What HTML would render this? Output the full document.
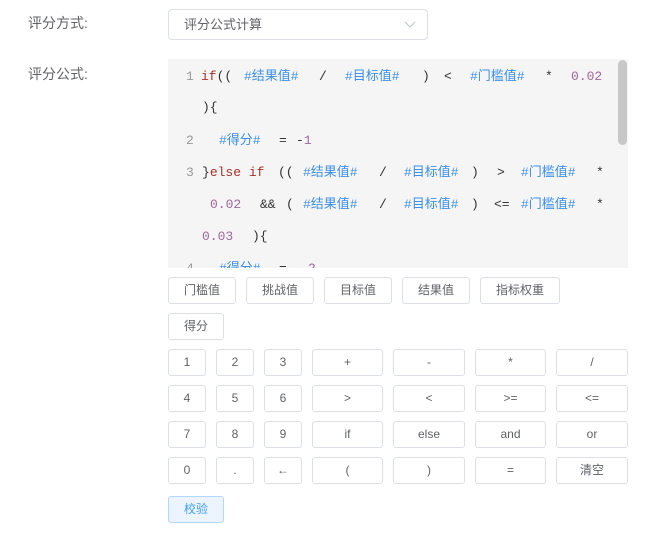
<!DOCTYPE html><html><head><meta charset="utf-8"><style>
body{margin:0;width:666px;height:537px;background:#fff;position:relative;overflow:hidden;font-family:"Liberation Sans","Noto Sans CJK SC",sans-serif;color:#606266}
.a{position:absolute}
.lbl{font-size:14px;line-height:16px}
.code{position:absolute;left:168px;top:59px;width:460px;height:209px;background:#f5f5f5;overflow:hidden}
.t{position:absolute;font-family:"Liberation Mono","Noto Sans CJK SC",monospace;font-size:13px;line-height:16px;white-space:pre;color:#333}
.n{color:#999}.k{color:#a9302a}.b{color:#3d8fe8}.p{color:#a0689c}
.btn{position:absolute;box-sizing:border-box;border:1px solid #dcdfe6;border-radius:3px;background:#fff;font-size:12px;line-height:25px;text-align:center;color:#606266}
</style></head><body>
<div class="a lbl" style="left:28px;top:15px">评分方式:</div>
<div class="a lbl" style="left:28px;top:66px">评分公式:</div>
<div class="a" style="left:168px;top:9px;width:260px;height:31px;box-sizing:border-box;border:1px solid #dcdfe6;border-radius:4px"></div>
<div class="a" style="left:184px;top:17px;font-size:13px;line-height:16px">评分公式计算</div>
<svg class="a" style="left:403px;top:19px" width="14" height="10"><path d="M2 3l5 5 5-5" fill="none" stroke="#c0c4cc" stroke-width="1"/></svg>
<div class="code">
<div style="position:absolute;left:450px;top:1px;width:9px;height:85px;background:#c8c8c8;border-radius:5px"></div>
</div>
<div id="c"></div>
<div class="a" style="left:0;top:0">
<!-- line1 y69 -->
<span class="t n" style="left:186px;top:69px">1</span><span class="t" style="left:201px;top:69px"><span class="k">if</span>((</span>
<span class="t b" style="left:244px;top:69px">#结果值#</span><span class="t" style="left:319px;top:69px">/</span>
<span class="t b" style="left:345px;top:69px">#目标值#</span><span class="t" style="left:422px;top:69px">)</span><span class="t" style="left:444px;top:69px">&lt;</span>
<span class="t b" style="left:470px;top:69px">#门槛值#</span><span class="t" style="left:545px;top:69px">*</span><span class="t p" style="left:571px;top:69px">0.02</span>
<span class="t" style="left:202px;top:100px">){</span>
<span class="t n" style="left:186px;top:133px">2</span><span class="t b" style="left:219px;top:133px">#得分#</span><span class="t" style="left:279px;top:133px">=</span><span class="t" style="left:296px;top:133px">-<span class="p">1</span></span>
<span class="t n" style="left:186px;top:165px">3</span><span class="t" style="left:202px;top:165px">}<span class="k">else if</span></span><span class="t" style="left:278px;top:165px">((</span>
<span class="t b" style="left:303px;top:165px">#结果值#</span><span class="t" style="left:379px;top:165px">/</span><span class="t b" style="left:404px;top:165px">#目标值#</span>
<span class="t" style="left:471px;top:165px">)</span><span class="t" style="left:497px;top:165px">&gt;</span><span class="t b" style="left:521px;top:165px">#门槛值#</span><span class="t" style="left:596px;top:165px">*</span>
<span class="t p" style="left:210px;top:197px">0.02</span><span class="t" style="left:260px;top:197px">&amp;&amp;</span><span class="t" style="left:286px;top:197px">(</span>
<span class="t b" style="left:303px;top:197px">#结果值#</span><span class="t" style="left:379px;top:197px">/</span><span class="t b" style="left:404px;top:197px">#目标值#</span>
<span class="t" style="left:471px;top:197px">)</span><span class="t" style="left:494px;top:197px">&lt;=</span><span class="t b" style="left:521px;top:197px">#门槛值#</span><span class="t" style="left:596px;top:197px">*</span>
<span class="t p" style="left:202px;top:229px">0.03</span><span class="t" style="left:252px;top:229px">){</span>
</div>
<div class="a" style="left:168px;top:260px;width:450px;height:8px;overflow:hidden">
<span class="t n" style="left:18px;top:1px">4</span><span class="t b" style="left:51px;top:1px">#得分#</span><span class="t" style="left:111px;top:1px">=</span><span class="t p" style="left:140px;top:1px">2</span>
</div>
<div class="btn" style="left:168px;top:277px;width:68px;height:27px">门槛值</div>
<div class="btn" style="left:246px;top:277px;width:68px;height:27px">挑战值</div>
<div class="btn" style="left:324px;top:277px;width:68px;height:27px">目标值</div>
<div class="btn" style="left:402px;top:277px;width:68px;height:27px">结果值</div>
<div class="btn" style="left:480px;top:277px;width:80px;height:27px">指标权重</div>
<div class="btn" style="left:168px;top:313px;width:56px;height:27px">得分</div>

<div class="btn" style="left:168px;top:349px;width:38px;height:27px">1</div>
<div class="btn" style="left:216px;top:349px;width:38px;height:27px">2</div>
<div class="btn" style="left:264px;top:349px;width:38px;height:27px">3</div>
<div class="btn" style="left:312px;top:349px;width:71px;height:27px">+</div>
<div class="btn" style="left:393px;top:349px;width:72px;height:27px">-</div>
<div class="btn" style="left:475px;top:349px;width:71px;height:27px">*</div>
<div class="btn" style="left:556px;top:349px;width:72px;height:27px">/</div>

<div class="btn" style="left:168px;top:385px;width:38px;height:27px">4</div>
<div class="btn" style="left:216px;top:385px;width:38px;height:27px">5</div>
<div class="btn" style="left:264px;top:385px;width:38px;height:27px">6</div>
<div class="btn" style="left:312px;top:385px;width:71px;height:27px">&gt;</div>
<div class="btn" style="left:393px;top:385px;width:72px;height:27px">&lt;</div>
<div class="btn" style="left:475px;top:385px;width:71px;height:27px">&gt;=</div>
<div class="btn" style="left:556px;top:385px;width:72px;height:27px">&lt;=</div>

<div class="btn" style="left:168px;top:421px;width:38px;height:27px">7</div>
<div class="btn" style="left:216px;top:421px;width:38px;height:27px">8</div>
<div class="btn" style="left:264px;top:421px;width:38px;height:27px">9</div>
<div class="btn" style="left:312px;top:421px;width:71px;height:27px">if</div>
<div class="btn" style="left:393px;top:421px;width:72px;height:27px">else</div>
<div class="btn" style="left:475px;top:421px;width:71px;height:27px">and</div>
<div class="btn" style="left:556px;top:421px;width:72px;height:27px">or</div>

<div class="btn" style="left:168px;top:457px;width:38px;height:27px">0</div>
<div class="btn" style="left:216px;top:457px;width:38px;height:27px">.</div>
<div class="btn" style="left:264px;top:457px;width:38px;height:27px">←</div>
<div class="btn" style="left:312px;top:457px;width:71px;height:27px">(</div>
<div class="btn" style="left:393px;top:457px;width:72px;height:27px">)</div>
<div class="btn" style="left:475px;top:457px;width:71px;height:27px">=</div>
<div class="btn" style="left:556px;top:457px;width:72px;height:27px">清空</div>

<div class="btn" style="left:168px;top:496px;width:56px;height:27px;background:#ecf5ff;border-color:#b3d8ff;color:#409eff">校验</div>
</body></html>
